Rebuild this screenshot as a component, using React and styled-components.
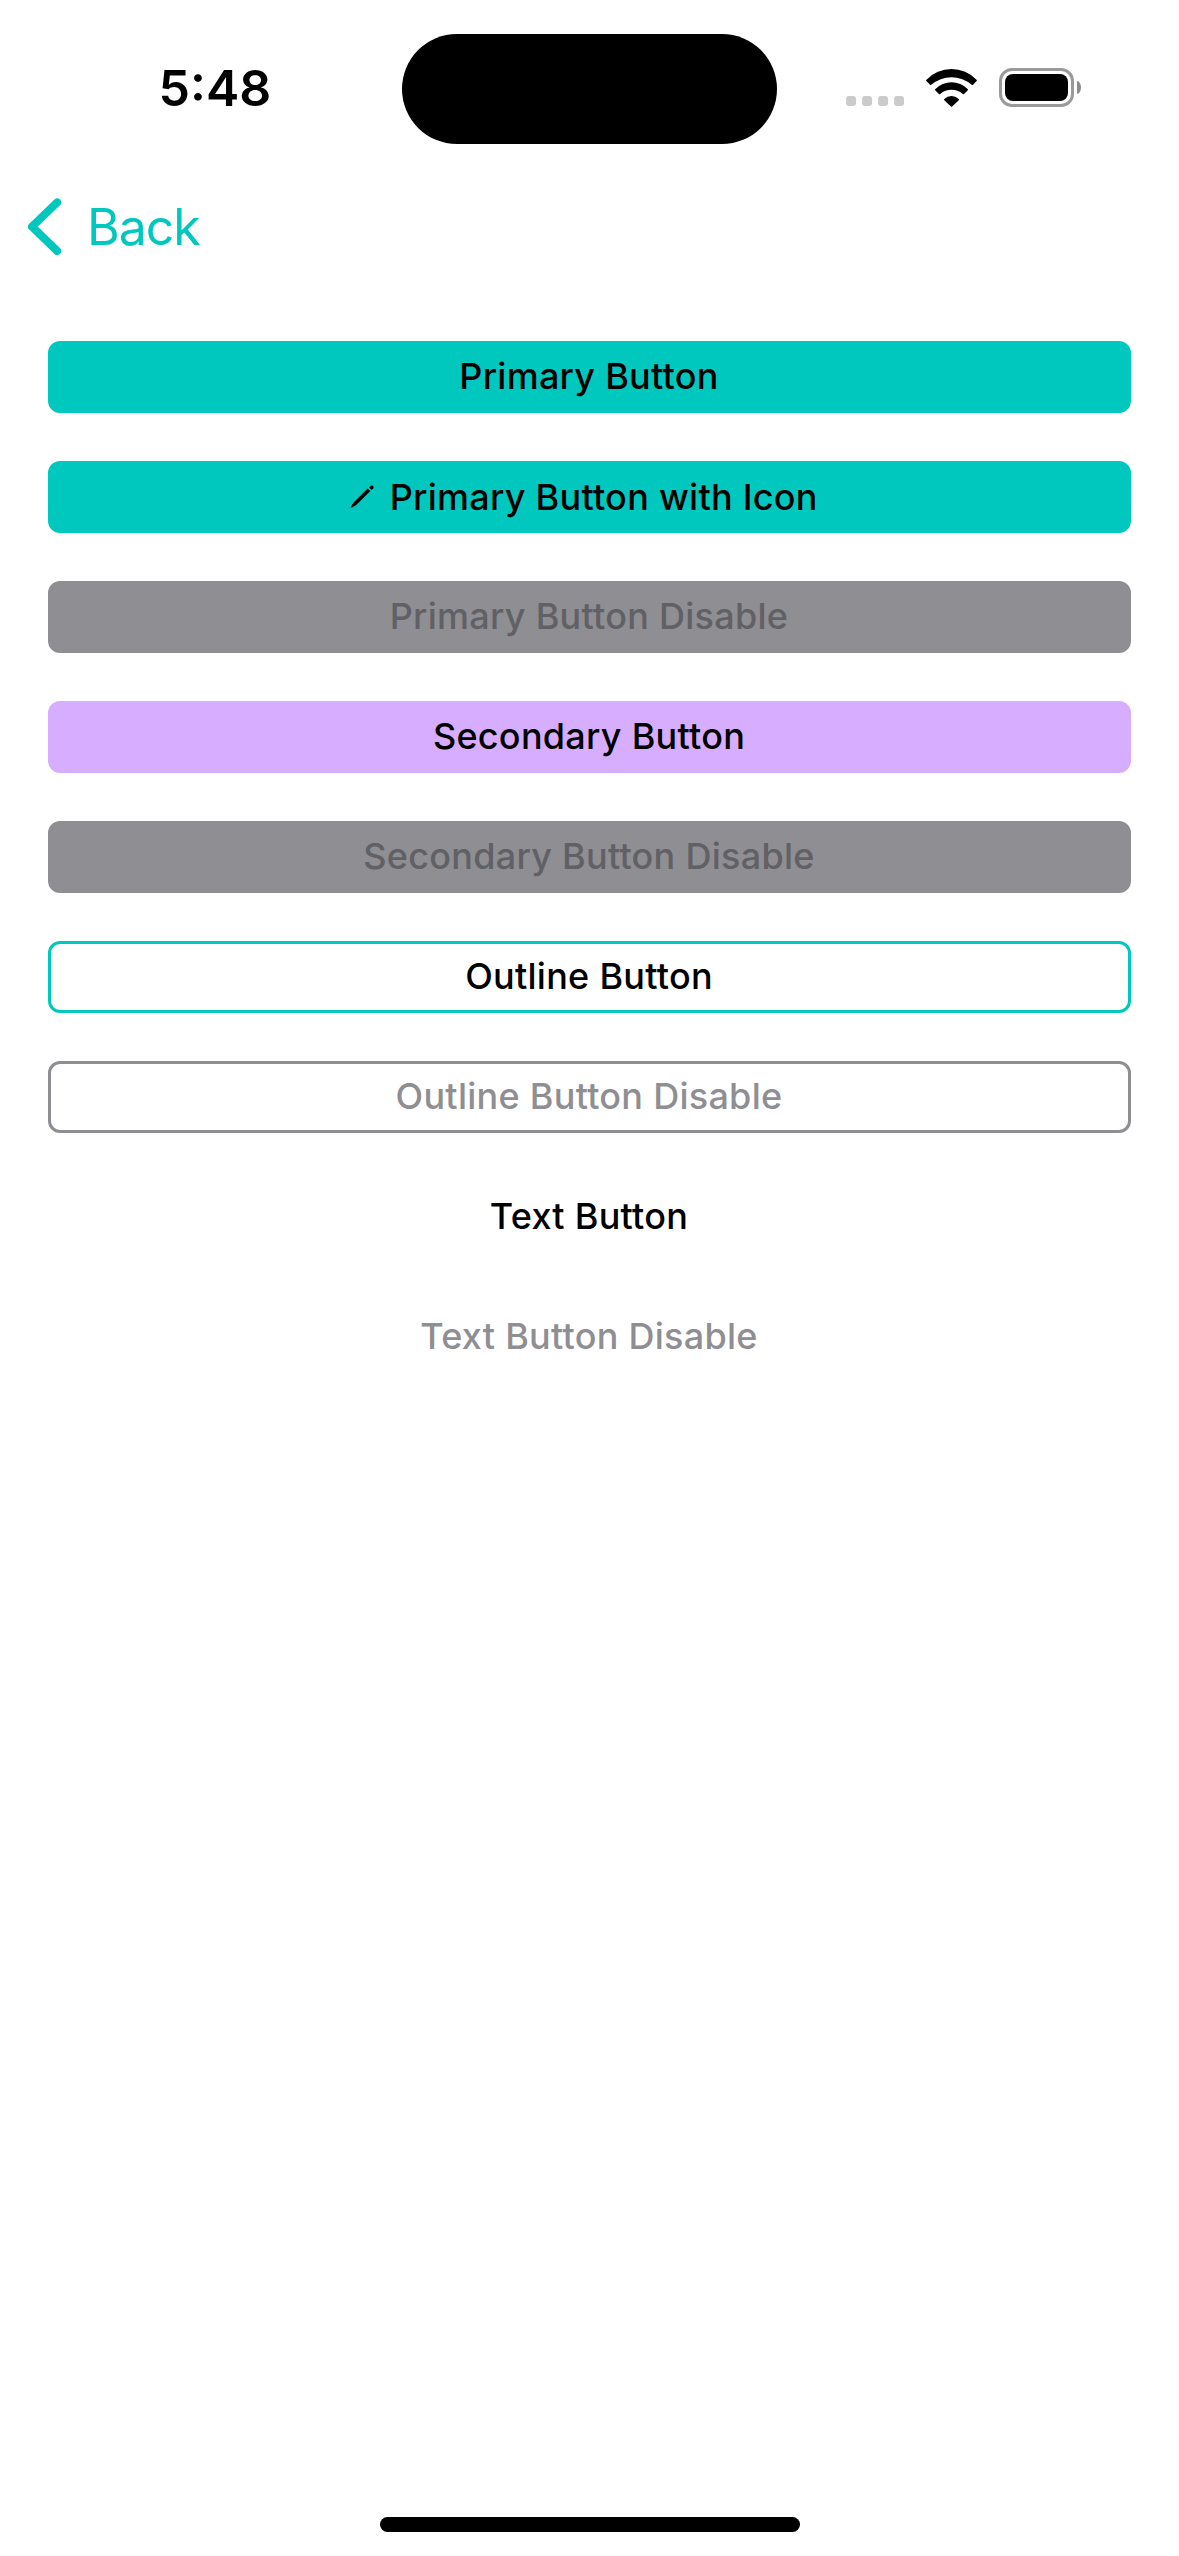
import React from 'react';
import styled, { createGlobalStyle } from 'styled-components';

const TEAL = '#00c8be';
const GRAY = '#8e8e93';

const GlobalStyle = createGlobalStyle`
  body {
    margin: 0;
    background: #fff;
    font-family: Inter, 'Liberation Sans', sans-serif;
  }
`;

const Screen = styled.div`
  box-sizing: border-box;
  width: 1179px;
  height: 2556px;
  display: flex;
  flex-direction: column;
  background: #fff;
  overflow: hidden;
`;

const StatusBar = styled.header`
  display: grid;
  grid-template-columns: 402px 375px 402px;
  height: 177px;
  align-items: start;
`;

const Clock = styled.time`
  margin: 58px 0 0 158.5px;
  font-size: 50px;
  line-height: 60px;
  font-weight: 600;
  letter-spacing: 0;
  color: #000;
`;

const Island = styled.div`
  margin-top: 33.6px;
  height: 110.2px;
  border-radius: 55px;
  background: #000;
`;

const StatusIcons = styled.div`
  display: flex;
  padding: 68px 0 0 69px;
`;

const SignalDots = styled.div`
  display: flex;
  gap: 6px;
  padding-top: 28px;
  margin-right: 22px;
`;

const Dot = styled.span`
  width: 10px;
  height: 10px;
  border-radius: 3px;
  background: #cbcbcb;
`;

const WifiIcon = styled.svg`
  display: block;
  width: 51px;
  height: 38px;
  margin: 0.5px 22px 0 0;
`;

const BatteryShell = styled.div`
  box-sizing: border-box;
  width: 75px;
  height: 39px;
  padding: 3px;
  border: 3px solid #9a9a9a;
  border-radius: 13px;
`;

const BatteryFill = styled.div`
  height: 27px;
  border-radius: 8px;
  background: #000;
`;

const BatteryCap = styled.div`
  width: 4px;
  height: 13px;
  margin: 13px 0 0 3px;
  border-radius: 0 4px 4px 0 / 0 6.5px 6.5px 0;
  background: #8c8c8c;
`;

const NavBar = styled.nav`
  display: flex;
  height: 164px;
`;

const BackButton = styled.button`
  display: flex;
  align-items: flex-start;
  padding: 20px 0 0 26.5px;
  border: 0;
  background: none;
  font: 400 50px/60px Inter, 'Liberation Sans', sans-serif;
  letter-spacing: -1px;
  color: ${TEAL};
`;

const Chevron = styled.svg`
  display: block;
  width: 36px;
  height: 60px;
  margin-right: 24.5px;
`;

const ButtonList = styled.main`
  display: flex;
  flex-direction: column;
  gap: 48px;
  padding: 0 48px;
  flex: 1;
`;

const variants = {
  primary: { background: TEAL, border: TEAL, color: '#000', disabledBackground: GRAY, disabledBorder: GRAY, disabledColor: '#606065' },
  secondary: { background: '#d6adff', border: '#d6adff', color: '#000', disabledBackground: GRAY, disabledBorder: GRAY, disabledColor: '#606065' },
  outline: { background: 'transparent', border: TEAL, color: '#000', disabledBackground: 'transparent', disabledBorder: GRAY, disabledColor: GRAY },
  text: { background: 'transparent', border: 'transparent', color: '#000', disabledBackground: 'transparent', disabledBorder: 'transparent', disabledColor: GRAY },
};

const pick = (key, disabledKey) => ({ $variant, disabled }) =>
  variants[$variant][disabled ? disabledKey : key];

const Button = styled.button`
  box-sizing: border-box;
  display: flex;
  align-items: center;
  justify-content: center;
  width: 100%;
  height: 72px;
  padding: ${({ $hasIcon }) => ($hasIcon ? '0 11px 0 0' : '0 1px 2px 0')};
  border: 3px solid ${pick('border', 'disabledBorder')};
  border-radius: 12px;
  background: ${pick('background', 'disabledBackground')};
  color: ${pick('color', 'disabledColor')};
  font: 500 36px/44px Inter, 'Liberation Sans', sans-serif;
  letter-spacing: 0.27px;
  white-space: nowrap;
`;

const PencilIcon = styled.svg`
  display: block;
  width: 24px;
  height: 24px;
  margin-right: 15.5px;
`;

const HomeIndicator = styled.div`
  width: 420px;
  height: 15px;
  margin: 0 auto 24px 380px;
  border-radius: 8px;
  background: #000;
`;

const Pencil = () => (
  <PencilIcon viewBox="0 0 24 24" fill="currentColor">
    <path d="M17.6 3.4 L20.3 6.1 L6.2 20.1 Q4.5 21.7 0.4 23.2 Q1.8 19.4 3.6 17.4 Z" />
    <path d="M19.1 2.5 Q20.6 0.1 22.4 0.6 Q24.1 1.3 23.5 3 Q22.9 4.1 21.4 4.8 Z" />
  </PencilIcon>
);

const buttons = [
  { label: 'Primary Button', variant: 'primary' },
  { label: 'Primary Button with Icon', variant: 'primary', icon: true },
  { label: 'Primary Button Disable', variant: 'primary', disabled: true },
  { label: 'Secondary Button', variant: 'secondary' },
  { label: 'Secondary Button Disable', variant: 'secondary', disabled: true },
  { label: 'Outline Button', variant: 'outline' },
  { label: 'Outline Button Disable', variant: 'outline', disabled: true },
  { label: 'Text Button', variant: 'text' },
  { label: 'Text Button Disable', variant: 'text', disabled: true },
];

export default function App() {
  return (
    <>
      <GlobalStyle />
      <Screen>
        <StatusBar>
          <Clock>5:48</Clock>
          <Island />
          <StatusIcons>
            <SignalDots>
              <Dot />
              <Dot />
              <Dot />
              <Dot />
            </SignalDots>
            <WifiIcon viewBox="0 0 50 37">
              <path d="M0.4 11.6 Q-0.2 11 0.5 10.4 A34 34 0 0 1 49.5 10.4 Q50.2 11 49.6 11.6 L46 15.3 Q45.4 15.8 44.8 15.3 A30.3 30.3 0 0 0 5.2 15.3 Q4.6 15.8 4 15.3 Z" />
              <path d="M9 20.6 Q8.6 20 9.2 19.5 A22 22 0 0 1 40.8 19.5 Q41.4 20 41 20.6 L37.3 24.3 Q36.7 24.8 36.1 24.3 A17.4 17.4 0 0 0 13.9 24.3 Q13.3 24.8 12.7 24.3 Z" />
              <path d="M17.9 30.4 Q17.4 29.8 18 29.2 A10 10 0 0 1 32 29.2 Q32.6 29.8 32.1 30.4 L25.6 36.7 Q25 37.3 24.4 36.7 Z" />
            </WifiIcon>
            <BatteryShell>
              <BatteryFill />
            </BatteryShell>
            <BatteryCap />
          </StatusIcons>
        </StatusBar>
        <NavBar>
          <BackButton>
            <Chevron viewBox="0 0 36 60" fill="none" stroke="currentColor" strokeWidth="8" strokeLinecap="round" strokeLinejoin="round">
              <path d="M30.2 5.4 L5 29.7 L30.2 54" />
            </Chevron>
            Back
          </BackButton>
        </NavBar>
        <ButtonList>
          {buttons.map(({ label, variant, icon, disabled }) => (
            <Button key={label} $variant={variant} $hasIcon={icon} disabled={disabled}>
              {icon && <Pencil />}
              {label}
            </Button>
          ))}
        </ButtonList>
        <HomeIndicator />
      </Screen>
    </>
  );
}
